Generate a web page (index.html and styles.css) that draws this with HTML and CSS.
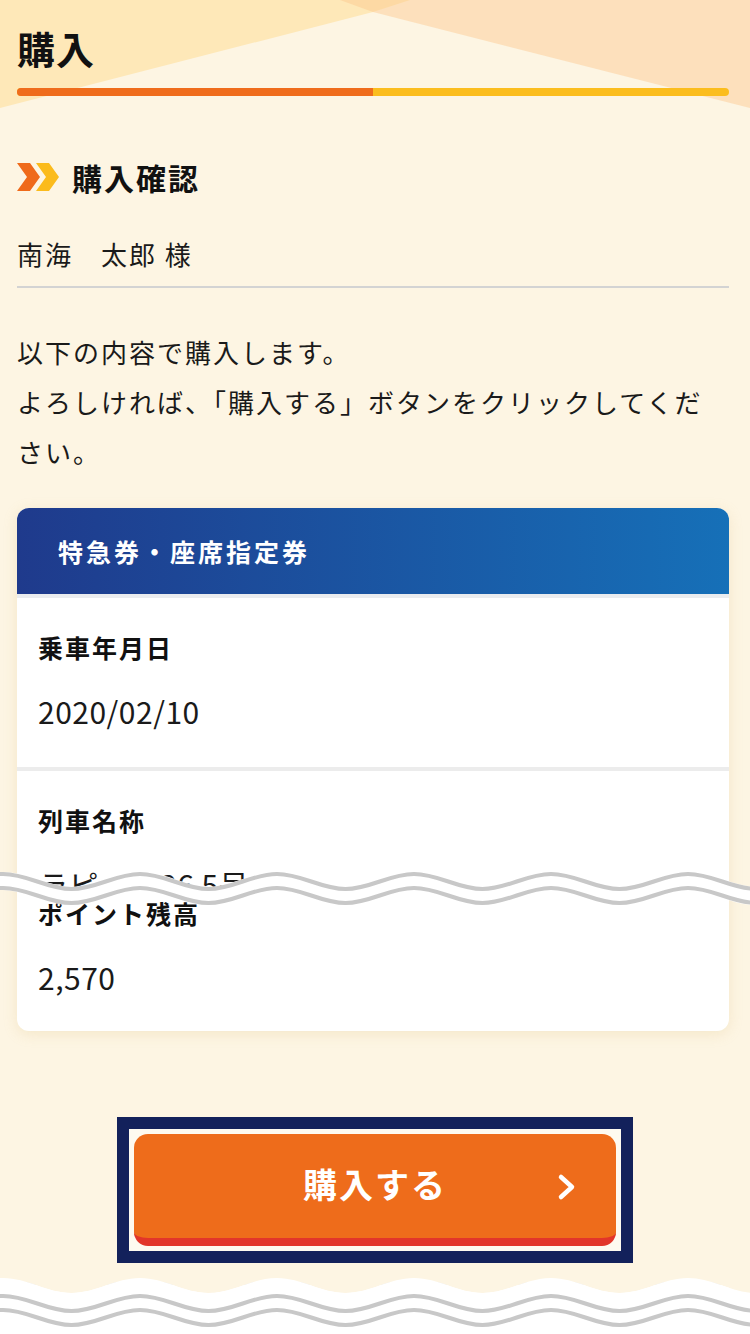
FILE: index.html
```html
<!DOCTYPE html>
<html lang="ja">
<head>
    <meta charset="UTF-8">
    <meta name="viewport" content="width=device-width, initial-scale=1.0">
    <title>購入</title>
    <link rel="stylesheet" href="styles.css">
</head>
<body>
    <!-- Page header -->
    <header class="page-head">
        <h1 class="page-title">購入</h1>
        <div class="progress"><span class="progress-done"></span></div>
    </header>

    <main class="content">
        <h2 class="section-title">
            <svg class="section-icon" width="42" height="28" viewBox="0 0 42 28">
                <polygon points="0,0 13,0 23,14 13,28 0,28 10,14" fill="#ef6a1a"/>
                <polygon points="19,0 32,0 42,14 32,28 19,28 29,14" fill="#fbbb1c"/>
            </svg>
            購入確認
        </h2>

        <p class="user-name">南海　太郎 様</p>

        <p class="lead">以下の内容で購入します。<br>よろしければ、「購入する」ボタンをクリックしてください。</p>

        <!-- Ticket card -->
        <div class="card-wrap">
            <section class="card">
                <h3 class="card-head">特急券・座席指定券</h3>
                <dl class="card-body">
                    <div class="item">
                        <dt>乗車年月日</dt>
                        <dd>2020/02/10</dd>
                    </div>
                    <div class="item item-cut">
                        <dt>列車名称</dt>
                        <dd>ラピート36 5号</dd>
                    </div>
                    <div class="item item-after-cut">
                        <dt>ポイント残高</dt>
                        <dd>2,570</dd>
                    </div>
                </dl>
            </section>

            <!-- omitted part marker -->
            <svg class="cut-wave" width="750" height="44" viewBox="0 0 750 44">
                <path transform="translate(0,17)" fill="none" stroke="#fff" stroke-width="18" d="M-134 0 C-109.3 0 -90.2 15 -65.5 15 S-21.7 0 3 0 S46.8 15 71.5 15 S115.3 0 140 0 S183.8 15 208.5 15 S252.3 0 277 0 S320.8 15 345.5 15 S389.3 0 414 0 S457.8 15 482.5 15 S526.3 0 551 0 S594.8 15 619.5 15 S663.3 0 688 0 S731.8 15 756.5 15 S800.3 0 825 0"/>
                <path transform="translate(0,10)" fill="none" stroke="#c8c8c8" stroke-width="4" d="M-134 0 C-109.3 0 -90.2 15 -65.5 15 S-21.7 0 3 0 S46.8 15 71.5 15 S115.3 0 140 0 S183.8 15 208.5 15 S252.3 0 277 0 S320.8 15 345.5 15 S389.3 0 414 0 S457.8 15 482.5 15 S526.3 0 551 0 S594.8 15 619.5 15 S663.3 0 688 0 S731.8 15 756.5 15 S800.3 0 825 0"/>
                <path transform="translate(0,24)" fill="none" stroke="#c8c8c8" stroke-width="4" d="M-134 0 C-109.3 0 -90.2 15 -65.5 15 S-21.7 0 3 0 S46.8 15 71.5 15 S115.3 0 140 0 S183.8 15 208.5 15 S252.3 0 277 0 S320.8 15 345.5 15 S389.3 0 414 0 S457.8 15 482.5 15 S526.3 0 551 0 S594.8 15 619.5 15 S663.3 0 688 0 S731.8 15 756.5 15 S800.3 0 825 0"/>
            </svg>
        </div>

        <div class="action">
            <div class="focus-ring">
                <button class="buy-btn" type="button">
                    購入する
                    <svg class="buy-arrow" width="22" height="28" viewBox="0 0 22 28">
                        <polyline points="5,4 16,14 5,24" fill="none" stroke="#fff" stroke-width="4.5" stroke-linecap="round" stroke-linejoin="round"/>
                    </svg>
                </button>
            </div>
        </div>

        <div class="next-card">
            <svg class="cut-wave-bottom" width="750" height="60" viewBox="0 0 750 60">
                <path transform="translate(0,4)" fill="#fdf5e3" d="M-134 0 C-109.3 0 -90.2 15 -65.5 15 S-21.7 0 3 0 S46.8 15 71.5 15 S115.3 0 140 0 S183.8 15 208.5 15 S252.3 0 277 0 S320.8 15 345.5 15 S389.3 0 414 0 S457.8 15 482.5 15 S526.3 0 551 0 S594.8 15 619.5 15 S663.3 0 688 0 S731.8 15 756.5 15 S800.3 0 825 0 V-20 H-134 Z"/>
                <path transform="translate(0,4)" fill="#fff" d="M-134 0 C-109.3 0 -90.2 15 -65.5 15 S-21.7 0 3 0 S46.8 15 71.5 15 S115.3 0 140 0 S183.8 15 208.5 15 S252.3 0 277 0 S320.8 15 345.5 15 S389.3 0 414 0 S457.8 15 482.5 15 S526.3 0 551 0 S594.8 15 619.5 15 S663.3 0 688 0 S731.8 15 756.5 15 S800.3 0 825 0 V70 H-134 Z"/>
                <path transform="translate(0,22)" fill="none" stroke="#c8c8c8" stroke-width="4" d="M-134 0 C-109.3 0 -90.2 15 -65.5 15 S-21.7 0 3 0 S46.8 15 71.5 15 S115.3 0 140 0 S183.8 15 208.5 15 S252.3 0 277 0 S320.8 15 345.5 15 S389.3 0 414 0 S457.8 15 482.5 15 S526.3 0 551 0 S594.8 15 619.5 15 S663.3 0 688 0 S731.8 15 756.5 15 S800.3 0 825 0"/>
                <path transform="translate(0,36)" fill="none" stroke="#c8c8c8" stroke-width="4" d="M-134 0 C-109.3 0 -90.2 15 -65.5 15 S-21.7 0 3 0 S46.8 15 71.5 15 S115.3 0 140 0 S183.8 15 208.5 15 S252.3 0 277 0 S320.8 15 345.5 15 S389.3 0 414 0 S457.8 15 482.5 15 S526.3 0 551 0 S594.8 15 619.5 15 S663.3 0 688 0 S731.8 15 756.5 15 S800.3 0 825 0"/>
            </svg>
        </div>
    </main>
</body>
</html>
```

FILE: styles.css
```css
/* General */
html, body {
    margin: 0;
    padding: 0;
}

body {
    width: 750px;
    height: 1334px;
    overflow: hidden;
    background: #fdf5e3;
    color: #1a1a1a;
    font-family: "Noto Sans CJK JP", "Noto Sans", sans-serif;
}

/* Header */
.page-head {
    position: relative;
    height: 110px;
    padding: 25px 21px 0 17px;
    box-sizing: border-box;
    overflow: hidden;
}

.page-head::before,
.page-head::after {
    content: "";
    position: absolute;
    left: 0;
    top: 0;
    width: 100%;
    height: 100%;
}

.page-head::before {
    background: #fee8b8;
    clip-path: polygon(0 0, 410px 0, 373px 12px, 0 108px);
}

.page-head::after {
    background: rgba(252, 200, 140, 0.45);
    clip-path: polygon(340px 0, 750px 0, 750px 108px, 373px 12px);
}

.page-title {
    position: relative;
    z-index: 1;
    margin: 0;
    font-size: 38px;
    line-height: 46px;
    font-weight: 700;
    letter-spacing: 1px;
    color: #111;
}

.progress {
    position: relative;
    z-index: 1;
    display: flex;
    margin-top: 17px;
    height: 8px;
    border-radius: 4px;
    background: #fbbd1e;
    overflow: hidden;
}

.progress-done {
    width: 50%;
    background: #ef6c1c;
}

/* Content */
.content {
    padding: 0 21px 0 17px;
}

.section-title {
    display: flex;
    align-items: center;
    gap: 13px;
    margin: 47px 0 0;
    font-size: 30px;
    line-height: 40px;
    font-weight: 700;
    letter-spacing: 2px;
    color: #111;
}

.section-icon {
    flex-shrink: 0;
}

.user-name {
    margin: 37px 0 0;
    padding-bottom: 12px;
    border-bottom: 2px solid #d3d3d3;
    font-size: 26px;
    line-height: 40px;
    letter-spacing: 2px;
}

.lead {
    margin: 39px 0 0;
    font-size: 26px;
    line-height: 50px;
    letter-spacing: 2px;
}

/* Card */
.card-wrap {
    position: relative;
    margin: 31px -21px 0 -17px;
    padding: 0 21px 0 17px;
}

.card {
    background: #fff;
    border-radius: 12px;
    overflow: hidden;
    box-shadow: 0 3px 14px rgba(214, 180, 110, 0.22);
}

.card-head {
    display: flex;
    align-items: center;
    height: 86px;
    margin: 0;
    padding-left: 41px;
    background: linear-gradient(90deg, #1f3a8c, #1670b8);
    border-bottom: 4px solid #eaecef;
    color: #fff;
    font-size: 25px;
    font-weight: 700;
    letter-spacing: 3px;
}

.card-body {
    margin: 0;
}

.item {
    padding: 29px 21px 36px;
}

.item + .item {
    border-top: 4px solid #ececec;
}

.item dt {
    font-size: 25px;
    line-height: 40px;
    font-weight: 700;
    letter-spacing: 2px;
    color: #111;
}

.item dd {
    margin: 24px 0 0;
    font-size: 30px;
    line-height: 40px;
    letter-spacing: 0.5px;
}

.item-cut {
    height: 121px;
    box-sizing: border-box;
    overflow: hidden;
}

.item-after-cut {
    padding-top: 5px;
    padding-bottom: 34px;
}

.item-cut + .item-after-cut {
    border-top: 0;
}

.cut-wave {
    position: absolute;
    left: 0;
    top: 356px;
    display: block;
}

/* Buy button */
.action {
    display: flex;
    justify-content: center;
    margin-top: 86px;
    padding-left: 4px;
}

.focus-ring {
    border: 12px solid #13215b;
    padding: 5px;
    background: #fefaf0;
}

.buy-btn {
    position: relative;
    display: block;
    width: 482px;
    height: 112px;
    box-sizing: border-box;
    padding: 0 0 6px;
    border: 0;
    border-bottom: 8px solid #e2352a;
    border-radius: 14px;
    background: #ee6c1b;
    color: #fff;
    font-family: inherit;
    font-size: 34px;
    font-weight: 700;
    letter-spacing: 2px;
    cursor: pointer;
}

.buy-arrow {
    position: absolute;
    right: 38px;
    top: 39px;
}

/* Next card (cut off) */
.next-card {
    position: relative;
    margin-top: 19px;
    height: 49px;
    background: #fff;
    border-top: 3px solid #e6e6e6;
}

.cut-wave-bottom {
    position: absolute;
    left: -17px;
    top: -11px;
    display: block;
}
```
